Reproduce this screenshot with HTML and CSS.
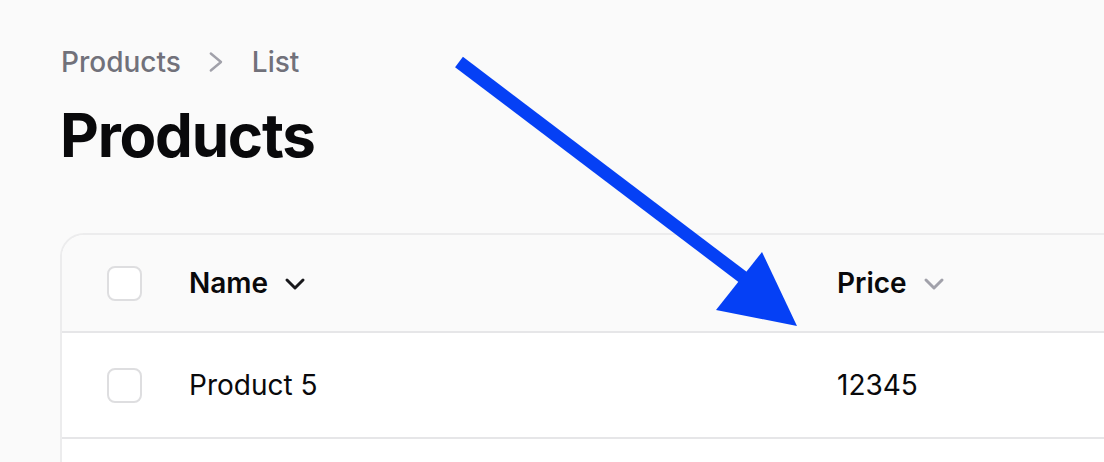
FILE: index.html
```html
<!DOCTYPE html>
<html lang="en">
	<head>
		<meta charset="utf-8" />
		<meta name="viewport" content="width=device-width, initial-scale=1.0" />
		<title>Products</title>
		<link rel="stylesheet" href="styles.css">
	</head>
	<body>
		<header class="page-header">
			<nav class="breadcrumbs">
				<span>Products</span>
				<svg class="crumb-sep" width="14" height="22" viewBox="0 0 14 22">
					<path d="M1.8 2.5 L12 11 L1.8 19.5" fill="none" stroke="currentColor" stroke-width="2.4" stroke-linecap="round" stroke-linejoin="round" />
				</svg>
				<span>List</span>
			</nav>
			<h1>Products</h1>
		</header>

		<div class="card">
			<div class="row head">
				<div class="cell check"><span class="checkbox"></span></div>
				<div class="cell name">
					Name
					<svg class="sort active" width="22" height="14" viewBox="0 0 22 14">
						<path d="M3 3 L11 11 L19 3" fill="none" stroke="currentColor" stroke-width="3" stroke-linecap="round" stroke-linejoin="round" />
					</svg>
				</div>
				<div class="cell price">
					Price
					<svg class="sort" width="22" height="14" viewBox="0 0 22 14">
						<path d="M3 3 L11 11 L19 3" fill="none" stroke="currentColor" stroke-width="3" stroke-linecap="round" stroke-linejoin="round" />
					</svg>
				</div>
			</div>
			<div class="row">
				<div class="cell check"><span class="checkbox"></span></div>
				<div class="cell name">Product 5</div>
				<div class="cell price">12345</div>
			</div>
			<div class="row"></div>
		</div>

		<svg class="pointer" width="1104" height="462" viewBox="0 0 1104 462">
			<line x1="459" y1="62" x2="744" y2="278" stroke="#0540f5" stroke-width="13" />
			<polygon points="762,252 797,326 716,310" fill="#0540f5" />
		</svg>
	</body>
</html>
```

FILE: styles.css
```css
body {
	margin: 0;
	padding: 42px 0 0 60px;
	background: #fafafa;
	color: #09090b;
	font-family: Inter, 'Noto Sans', sans-serif;
	overflow: hidden;
	position: relative;
	height: 462px;
	box-sizing: border-box;
}

.breadcrumbs {
	display: flex;
	align-items: center;
	gap: 28px;
	font-size: 28px;
	line-height: 40px;
	font-weight: 500;
	color: #71717a;
	padding-left: 1px;
}

.crumb-sep {
	color: #a1a1aa;
	margin-right: 1px;
}

h1 {
	margin: 17px 0 0;
	font-size: 60px;
	line-height: 72px;
	font-weight: 700;
	letter-spacing: -1.2px;
}

.card {
	margin-top: 62px;
	border: 2px solid #ececed;
	border-right: none;
	border-radius: 24px 0 0 0;
	background: #fff;
	overflow: hidden;
}

.row {
	display: flex;
	align-items: center;
	height: 104px;
	border-bottom: 2px solid #e6e6e8;
	font-size: 28px;
	line-height: 40px;
}

.row.head {
	height: 96px;
	background: #fafafa;
	font-weight: 600;
}

.cell.check {
	width: 36px;
	padding-left: 45px;
	margin-right: 46px;
}

.checkbox {
	display: block;
	width: 31px;
	height: 31px;
	border: 2px solid #dedee0;
	border-radius: 8px;
	background: #fff;
}

.cell.name {
	width: 648px;
	display: flex;
	align-items: center;
	gap: 16px;
}

.cell.price {
	display: flex;
	align-items: center;
	gap: 16px;
}

.sort {
	color: #a1a1aa;
	margin-top: 2px;
}

.sort.active {
	color: #18181b;
}

.pointer {
	position: absolute;
	left: 0;
	top: 0;
	pointer-events: none;
}
```
